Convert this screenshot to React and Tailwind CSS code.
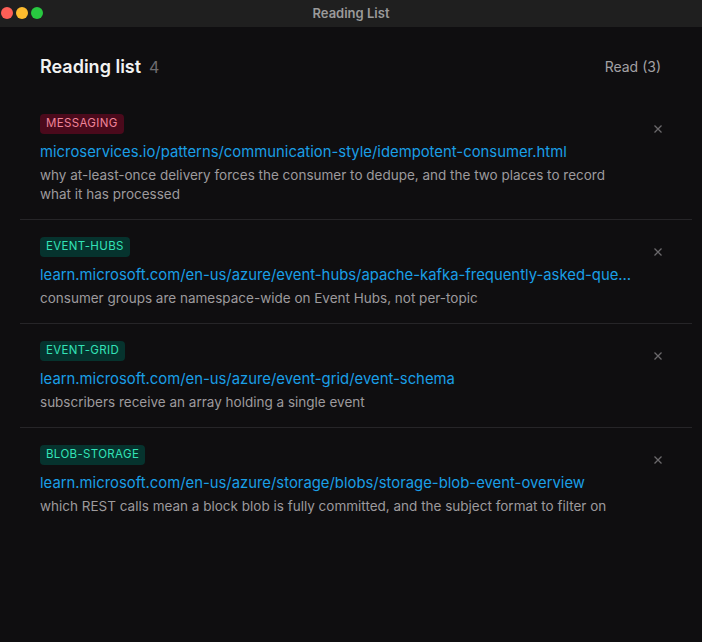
import React from 'react';

const items = [
  {
    tag: 'MESSAGING',
    tone: 'red',
    url: 'microservices.io/patterns/communication-style/idempotent-consumer.html',
    note: 'why at-least-once delivery forces the consumer to dedupe, and the two places to record what it has processed',
  },
  {
    tag: 'EVENT-HUBS',
    tone: 'teal',
    url: 'learn.microsoft.com/en-us/azure/event-hubs/apache-kafka-frequently-asked-questions',
    note: 'consumer groups are namespace-wide on Event Hubs, not per-topic',
  },
  {
    tag: 'EVENT-GRID',
    tone: 'teal',
    url: 'learn.microsoft.com/en-us/azure/event-grid/event-schema',
    note: 'subscribers receive an array holding a single event',
  },
  {
    tag: 'BLOB-STORAGE',
    tone: 'teal',
    url: 'learn.microsoft.com/en-us/azure/storage/blobs/storage-blob-event-overview',
    note: 'which REST calls mean a block blob is fully committed, and the subject format to filter on',
  },
];

function Tag({ label, tone }) {
  const cls =
    tone === 'red'
      ? 'bg-[#4b0a1c] text-[#f0849a]'
      : 'bg-[#06332e] text-[#33e2b7]';
  return (
    <div className="flex">
      <span className={`flex h-5 items-center rounded-[4px] px-1.5 text-[11.5px] leading-none tracking-[0.03em] ${cls}`}>
        {label}
      </span>
    </div>
  );
}

function Item({ item, last }) {
  return (
    <div className={`flex pl-5 pr-[24px] pt-[17px] pb-[15px] ${last ? '' : 'border-b border-[#262528]'}`}>
      <div className="min-w-0 flex-1">
        <Tag label={item.tag} tone={item.tone} />
        <div className="mt-[7px] truncate text-[14.85px] leading-[22px] text-[#1a9fe6]">{item.url}</div>
        <div className="mt-[3px] text-[13.5px] leading-[19px] text-[#9d9a9d]">{item.note}</div>
      </div>
      <button className="ml-4 flex h-5 w-5 items-start justify-center pt-[11px] text-[#6b696c]">
        <svg width="8" height="8" viewBox="0 0 8 8" stroke="currentColor" strokeWidth="1.3" fill="none">
          <path d="M0.5 0.5l7 7M7.5 0.5l-7 7" />
        </svg>
      </button>
    </div>
  );
}

export default function App() {
  return (
    <div className="flex h-[642px] w-[702px] flex-col bg-[#0f0e10] font-['Inter',sans-serif]">
      {/* title bar */}
      <div className="relative flex h-[27px] shrink-0 items-center justify-center bg-[#1f1f1f]">
        <div className="absolute left-[1px] top-[7px] flex gap-[3px]">
          <span className="h-3 w-3 rounded-full bg-[#fe5f57]" />
          <span className="h-3 w-3 rounded-full bg-[#febc2e]" />
          <span className="h-3 w-3 rounded-full bg-[#28c840]" />
        </div>
        <span className="text-[13px] font-semibold text-[#9a9a9a]">Reading List</span>
      </div>

      <div className="pl-5 pr-[10px] pt-[25px]">
        <div className="mb-[17px] flex h-7 items-center justify-between pl-5 pr-[31px]">
          <div className="flex items-baseline gap-2">
            <h1 className="text-[18px] font-semibold text-[#f2f2f2]">Reading list</h1>
            <span className="text-[16px] text-[#6e6c6f]">4</span>
          </div>
          <span className="text-[14px] text-[#a3a1a4]">Read (3)</span>
        </div>

        <div>
          {items.map((it, i) => (
            <Item key={it.tag} item={it} last={i === items.length - 1} />
          ))}
        </div>
      </div>
    </div>
  );
}
